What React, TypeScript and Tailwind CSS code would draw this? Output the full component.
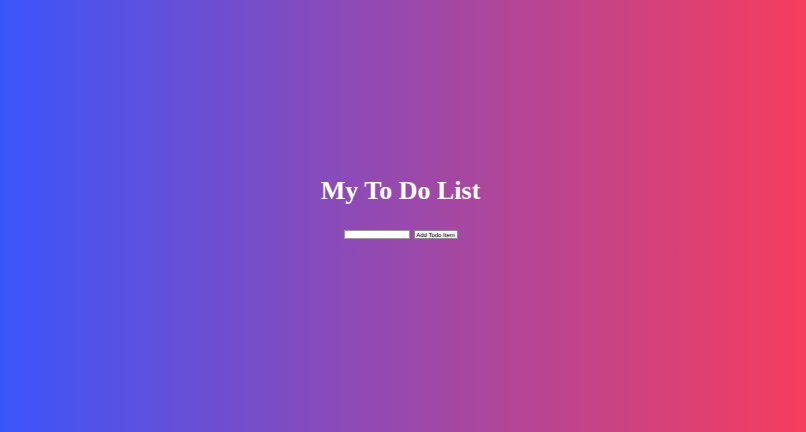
export default function App() {
  return (
    <div className="h-screen w-full bg-[linear-gradient(to_right,#3b55fb,#f63d5e)] flex flex-col items-center pt-[176px] pr-[5px]">
      <h1 className="text-white font-bold text-[26px] leading-[30px] font-['Liberation_Serif',serif]">
        My To Do List
      </h1>
      <div className="mt-[24px] flex items-center gap-[4px]">
        <input
          type="text"
          className="w-[66px] h-[9px] bg-white border border-[#9a9a9a] outline-none"
        />
        <button className="h-[9px] w-[44px] bg-[#efefef] border border-[#8a8a8a] rounded-[1px] text-black text-[6px] leading-none font-['Liberation_Sans',sans-serif] flex items-center justify-center">
          Add Todo Item
        </button>
      </div>
    </div>
  )
}
